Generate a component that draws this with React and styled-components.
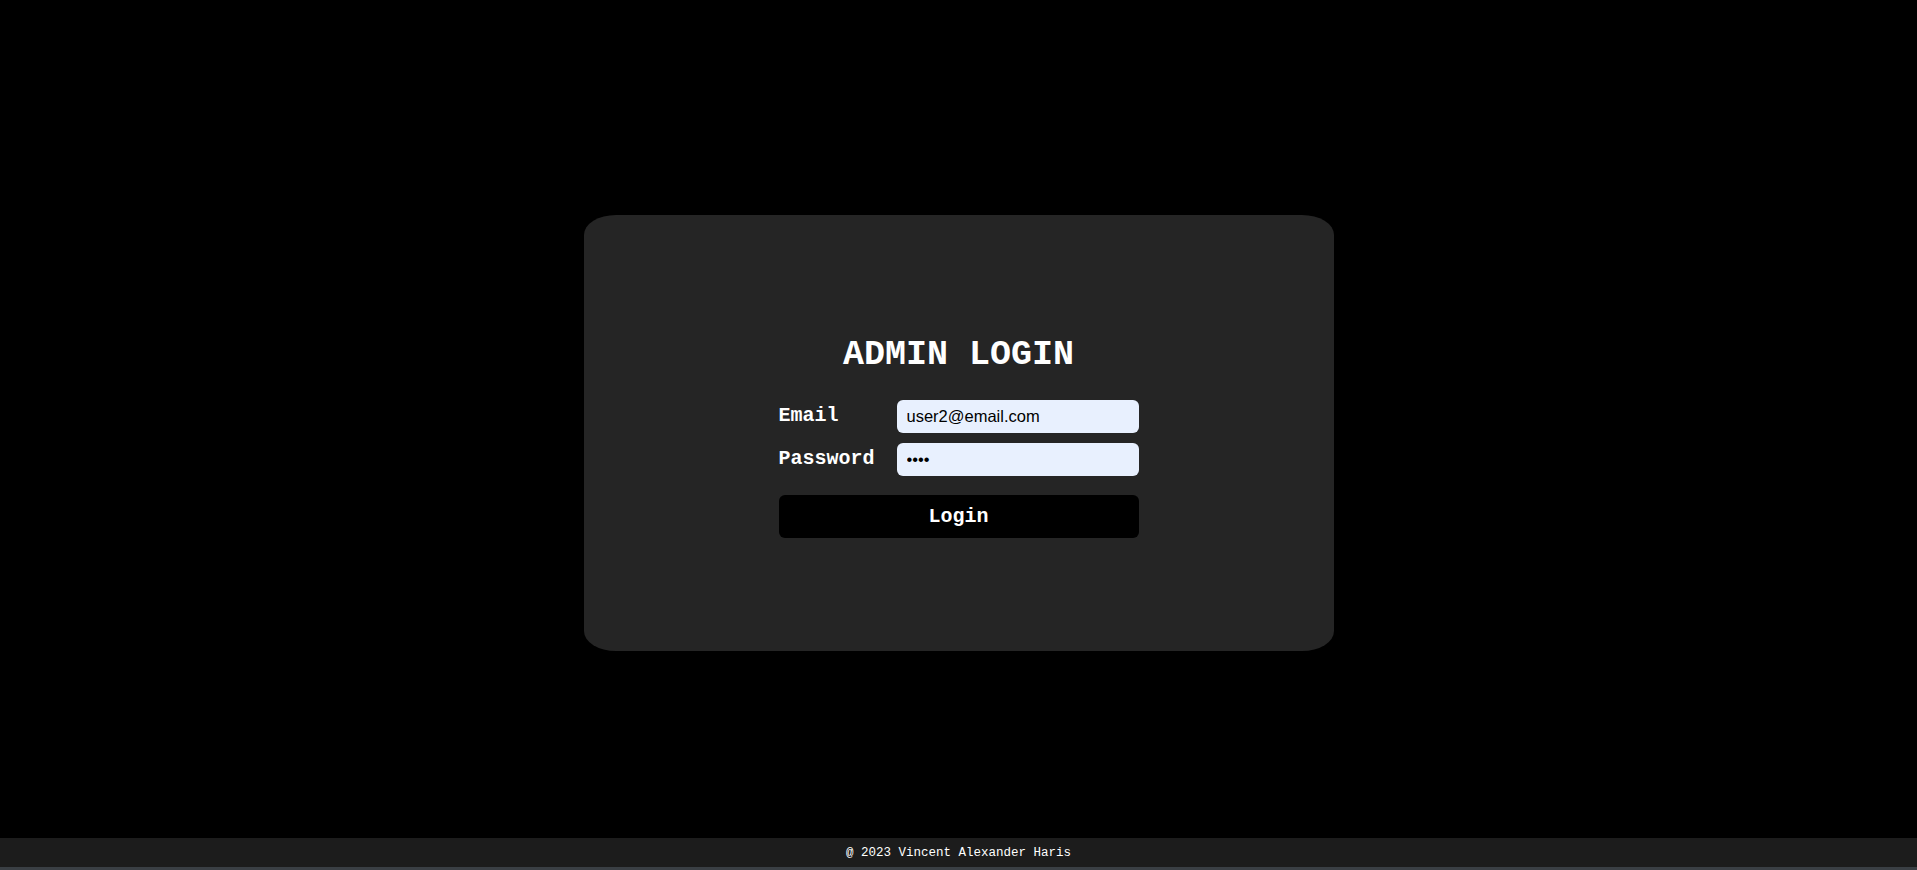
import React from 'react'
import styled, { createGlobalStyle } from 'styled-components'

const GlobalStyle = createGlobalStyle`
  html, body {
    margin: 0;
    padding: 0;
    background: #000000;
  }
  * {
    box-sizing: border-box;
  }
`

export default function App() {
  return (
    <>
      <GlobalStyle />
      <PageStyled>
        <main className="main-con">
          <div className="login-card">
            <h1>ADMIN LOGIN</h1>
            <form className="login-form" onSubmit={(e) => e.preventDefault()}>
              <div className="field-grid">
                <label htmlFor="email">Email</label>
                <input id="email" type="email" defaultValue="user2@email.com" />
                <label htmlFor="password">Password</label>
                <input id="password" type="password" defaultValue="1234" />
              </div>
              <button type="submit">Login</button>
            </form>
          </div>
        </main>
        <footer>@ 2023 Vincent Alexander Haris</footer>
      </PageStyled>
    </>
  )
}

const PageStyled = styled.div`
  min-height: 100vh;
  display: flex;
  flex-direction: column;
  font-family: "Liberation Mono", "Courier New", monospace;
  color: #ffffff;

  .main-con{
    flex: 1;
    display: flex;
    justify-content: center;
    align-items: flex-start;
    padding-top: 215px;
    .login-card{
      width: 750px;
      height: 436px;
      background: #252525;
      border-radius: 32px / 20px;
      display: flex;
      flex-direction: column;
      align-items: center;
      padding-top: 120px;
      h1{
        margin: 0;
        font-size: 35px;
        line-height: 40px;
        font-weight: 700;
      }
      .login-form{
        width: 360px;
        margin-top: 25px;
        .field-grid{
          display: grid;
          grid-template-columns: 118px 242px;
          grid-auto-rows: 33px;
          row-gap: 10px;
          align-items: center;
          label{
            font-size: 20px;
            font-weight: 700;
            padding-bottom: 3px;
          }
          input{
            height: 33px;
            width: 242px;
            border: none;
            outline: none;
            border-radius: 6px;
            background: #e8f0fe;
            color: #000000;
            padding: 0 10px;
            font-family: "Liberation Sans", Arial, sans-serif;
            font-size: 16.5px;
          }
        }
        button{
          display: block;
          width: 100%;
          height: 43px;
          margin-top: 19px;
          border: none;
          border-radius: 6px;
          background: #000000;
          color: #ffffff;
          font-family: "Liberation Mono", "Courier New", monospace;
          font-size: 20px;
          font-weight: 700;
          cursor: pointer;
        }
      }
    }
  }

  footer{
    height: 32px;
    background: #1c1c1c;
    border-bottom: 3px solid #3a3f44;
    display: flex;
    justify-content: center;
    align-items: center;
    font-size: 12.5px;
    color: #ffffff;
  }
`
